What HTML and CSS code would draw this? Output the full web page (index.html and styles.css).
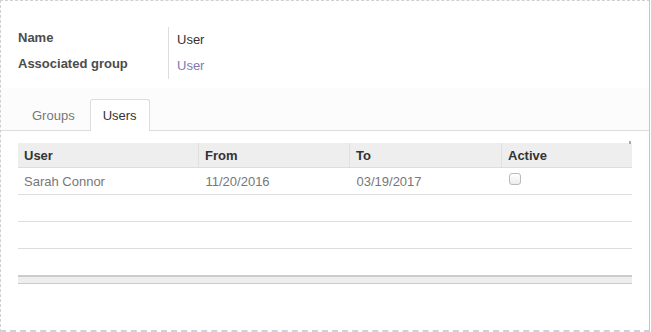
FILE: index.html
```html
<!DOCTYPE html>
<html lang="en">
<head>
    <meta charset="UTF-8">
    <title>Group Users</title>
    <link rel="stylesheet" href="styles.css">
</head>
<body>
    <div class="sheet">
        <div class="fields">
            <div class="label">Name</div>
            <div class="value">User</div>
            <div class="label">Associated group</div>
            <div class="value"><a href="#">User</a></div>
        </div>

        <div class="tabs">
            <a class="tab" href="#">Groups</a>
            <a class="tab active" href="#">Users</a>
        </div>

        <div class="tab-content">
            <table class="list">
                <thead>
                    <tr>
                        <th class="col-user">User</th>
                        <th class="col-from">From</th>
                        <th class="col-to">To</th>
                        <th>Active</th>
                    </tr>
                </thead>
                <tbody>
                    <tr>
                        <td>Sarah Connor</td>
                        <td>11/20/2016</td>
                        <td>03/19/2017</td>
                        <td><span class="checkbox"></span></td>
                    </tr>
                    <tr class="empty"><td></td><td></td><td></td><td></td></tr>
                    <tr class="empty"><td></td><td></td><td></td><td></td></tr>
                    <tr class="empty"><td></td><td></td><td></td><td></td></tr>
                </tbody>
                <tfoot>
                    <tr><td colspan="4"></td></tr>
                </tfoot>
            </table>
        </div>
    </div>
</body>
</html>
```

FILE: styles.css
```css
body {
    margin: 0;
    font-family: "Liberation Sans", Arial, sans-serif;
    font-size: 13px;
    color: #4c4c4c;
    background: white;
}
.sheet {
    width: 650px;
    height: 332px;
    box-sizing: border-box;
    border: 1px dashed #cfcfd4;
    border-right: 1px solid #c4c4ca;
    border-bottom: 2px dashed #d0d0d8;
    background: white;
}
.fields {
    display: grid;
    grid-template-columns: 151px auto;
    grid-auto-rows: 26px;
    margin: 26px 0 0 17px;
}
.label {
    font-weight: bold;
    line-height: 22px;
    border-right: 1px solid #ddd;
    color: #4c4c4c;
}
.value {
    line-height: 26px;
    padding-left: 8px;
    color: #333;
}
.value a {
    color: #7c7bad;
    text-decoration: none;
}
.tabs {
    display: flex;
    margin-top: 9px;
    height: 43px;
    padding: 0 0 0 17px;
    box-sizing: border-box;
    align-items: flex-end;
    background: #fcfcfc;
    border-bottom: 1px solid #ddd;
}
.tab {
    height: 30px;
    line-height: 31px;
    padding: 0 13px;
    color: #777;
    text-decoration: none;
    border: 1px solid transparent;
    border-bottom: none;
    margin-right: 1px;
}
.tab.active {
    padding: 0 12px;
    color: #333;
    background: white;
    border-color: #ddd;
    border-radius: 3px 3px 0 0;
    margin-bottom: -1px;
    height: 31px;
}
.tab-content {
    padding: 12px 17px 0 17px;
    position: relative;
}
.tab-content::after {
    content: "";
    position: absolute;
    right: 18px;
    top: 10px;
    width: 2px;
    height: 3px;
    background: #aaa;
}
.list {
    width: 614px;
    border-collapse: collapse;
    table-layout: fixed;
}
.list th {
    height: 24px;
    padding: 0 6px;
    text-align: left;
    font-weight: bold;
    color: #333;
    background: #eee;
    border-bottom: 1px solid #ddd;
    border-left: 1px solid #e0e0e0;
}
.list th:first-child {
    border-left: none;
}
.col-user { width: 168px; }
.col-from { width: 138px; }
.col-to { width: 139px; }
.list td {
    height: 26px;
    padding: 0 6px;
    color: #777;
    border-bottom: 1px solid #ddd;
}
.list td + td {
    padding-left: 7px;
}
.list tfoot td {
    height: 6px;
    padding: 0;
    background: #eee;
    border-top: 2px solid #ccc;
    border-bottom: 1px solid #ccc;
}
.checkbox {
    display: inline-block;
    width: 10px;
    height: 10px;
    border: 1px solid #bbb;
    border-radius: 3px;
    background: linear-gradient(#fff, #ececec);
    vertical-align: top;
    margin-top: -1px;
}
```
